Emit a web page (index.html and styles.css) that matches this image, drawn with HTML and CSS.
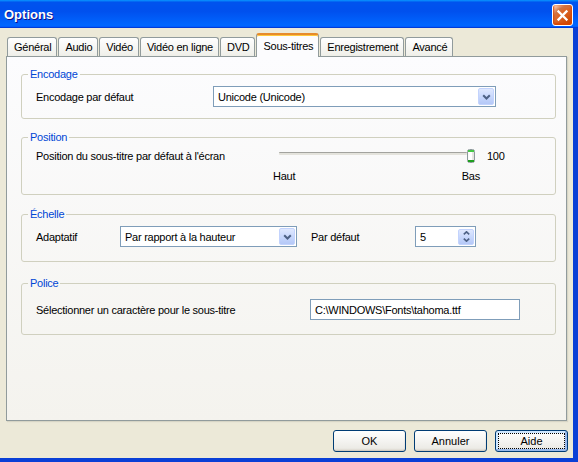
FILE: index.html
```html
<!DOCTYPE html>
<html lang="fr">
<head>
<meta charset="utf-8">
<title>Options</title>
<link rel="stylesheet" href="styles.css">
</head>
<body>
<div class="window">
  <div class="titlebar">
    <span class="title">Options</span>
    <div class="close" aria-label="Fermer">
      <svg width="13" height="13" viewBox="0 0 13 13"><path d="M2.5 2.5 L10.5 10.5 M10.5 2.5 L2.5 10.5" stroke="#fff" stroke-width="2.3" stroke-linecap="square" fill="none"/></svg>
    </div>
  </div>
  <div class="main">
    <div class="tabs">
      <div class="tab">Général</div>
      <div class="tab">Audio</div>
      <div class="tab">Vidéo</div>
      <div class="tab">Vidéo en ligne</div>
      <div class="tab">DVD</div>
      <div class="tab active">Sous-titres</div>
      <div class="tab">Enregistrement</div>
      <div class="tab">Avancé</div>
    </div>
    <div class="panel">
      <fieldset class="group grp-enc">
        <legend>Encodage</legend>
        <div class="row">
          <span class="label lbl-enc">Encodage par défaut</span>
          <div class="combo combo-enc">
            <span class="field-text">Unicode (Unicode)</span>
            <span class="drop"><svg width="9" height="6" viewBox="0 0 9 6"><path d="M1.2 1.2 L4.5 4.5 L7.8 1.2" stroke="#4d6185" stroke-width="2" fill="none"/></svg></span>
          </div>
        </div>
      </fieldset>

      <fieldset class="group grp-pos">
        <legend>Position</legend>
        <div class="row row-slider">
          <span class="label lbl-pos">Position du sous-titre par défaut à l'écran</span>
          <div class="slider">
            <span class="track"></span>
            <svg class="thumb" width="8" height="14" viewBox="0 0 8 14">
              <rect x="0.5" y="0.5" width="7" height="13" rx="2" fill="#f4f4f0" stroke="#8e9a9c"/>
              <rect x="1" y="1" width="6" height="2" fill="#45c645"/>
              <rect x="1" y="11" width="6" height="2" fill="#1f9f1f"/>
              <rect x="1.5" y="3" width="4" height="8" fill="#ffffff"/>
              <rect x="5.5" y="3" width="1" height="8" fill="#d6d6cf"/>
            </svg>
          </div>
          <span class="slider-value">100</span>
        </div>
        <div class="ticks">
          <span>Haut</span>
          <span>Bas</span>
        </div>
      </fieldset>

      <fieldset class="group grp-ech">
        <legend>Échelle</legend>
        <div class="row">
          <span class="label lbl-adapt">Adaptatif</span>
          <div class="combo combo-adapt">
            <span class="field-text">Par rapport à la hauteur</span>
            <span class="drop"><svg width="9" height="6" viewBox="0 0 9 6"><path d="M1.2 1.2 L4.5 4.5 L7.8 1.2" stroke="#4d6185" stroke-width="2" fill="none"/></svg></span>
          </div>
          <span class="label lbl-def">Par défaut</span>
          <div class="spin">
            <span class="field-text">5</span>
            <span class="spin-btns">
              <svg width="7" height="4" viewBox="0 0 7 4"><path d="M0.8 3.4 L3.5 0.8 L6.2 3.4" stroke="#4d6185" stroke-width="1.6" fill="none"/></svg>
              <svg width="7" height="4" viewBox="0 0 7 4"><path d="M0.8 0.6 L3.5 3.2 L6.2 0.6" stroke="#4d6185" stroke-width="1.6" fill="none"/></svg>
            </span>
          </div>
        </div>
      </fieldset>

      <fieldset class="group grp-pol">
        <legend>Police</legend>
        <div class="row">
          <span class="label lbl-pol">Sélectionner un caractère pour le sous-titre</span>
          <div class="textbox"><span class="field-text">C:\WINDOWS\Fonts\tahoma.ttf</span></div>
        </div>
      </fieldset>
    </div>
    <div class="buttons">
      <button class="btn">OK</button>
      <button class="btn">Annuler</button>
      <button class="btn btn-default">Aide</button>
    </div>
  </div>
</div>
</body>
</html>
```

FILE: styles.css
```css
* { box-sizing: border-box; }
html, body { margin: 0; padding: 0; }
body {
  width: 578px;
  height: 462px;
  overflow: hidden;
  font-family: "Liberation Sans", Arial, sans-serif;
  font-size: 11px;
  letter-spacing: -0.25px;
  color: #000;
  background: #ece9d8;
}
.window {
  width: 578px;
  height: 462px;
  display: flex;
  flex-direction: column;
}
.titlebar {
  flex: none;
  height: 28px;
  display: flex;
  align-items: center;
  justify-content: space-between;
  padding: 0 5px 0 4px;
  background: linear-gradient(180deg, #0997ff, #0053ee 8%, #0050ee 40%, #0066ff 88%, #0066ff 93%, #005bff 95%, #003dd7 96%, #003dd7);
}
.title {
  color: #fff;
  font-weight: bold;
  font-size: 13px;
  letter-spacing: 0;
  text-shadow: 1px 1px #0f1089;
  margin-top: 1px;
}
.close {
  width: 21px;
  height: 22px;
  margin-top: 2px;
  border: 1px solid #fff;
  border-radius: 3px;
  background: radial-gradient(circle at 90% 90%, #cc4600 0, #dc6527 55%, #cd7546 70%, #ffccb2 90%, #fff 100%);
  box-shadow: inset 0 -1px 2px 1px #da4600;
  display: flex;
  align-items: center;
  justify-content: center;
}
.main {
  flex: 1;
  display: flex;
  flex-direction: column;
  border-right: 5px solid #0a3fd6;
  border-bottom: 4px solid #0a3fd6;
  padding-top: 5px;
}
.tabs {
  flex: none;
  height: 23px;
  display: flex;
  align-items: flex-end;
  gap: 1px;
  padding-left: 7px;
}
.tab {
  height: 19px;
  padding: 0 5px 0 6px;
  border: 1px solid #919b9c;
  border-bottom: none;
  border-radius: 3px 3px 0 0;
  background: linear-gradient(180deg, #fff, #fafaf9 26%, #f0f0ea 95%, #ecebe5);
  display: flex;
  align-items: center;
  white-space: nowrap;
}
.tab.active {
  height: 24px;
  margin-bottom: -1px;
  padding-bottom: 1px;
  background: #fcfcfe;
  border-top: 2px solid #e68b2c;
  box-shadow: inset 0 1px #ffc83c;
  position: relative;
  z-index: 1;
}
.panel {
  flex: none;
  height: 365px;
  margin: 0 6px;
  border: 1px solid #919b9c;
  background: linear-gradient(180deg, #fcfcfe, #f4f3ee);
  box-shadow: 1px 1px 1px rgba(208, 206, 191, 0.75);
  padding: 11px 10px 0 14px;
  display: flex;
  flex-direction: column;
}
.group {
  margin: 0;
  min-width: 0;
  border: 1px solid #d0d0bf;
  border-radius: 3px;
  padding: 0 6px;
}
.group legend {
  padding: 0 2px;
  line-height: 13px;
  color: #0046d5;
}
.grp-enc { padding-top: 5px; padding-bottom: 11px; }
.grp-pos { margin-top: 12px; padding-top: 4px; padding-bottom: 11px; }
.grp-ech { margin-top: 13px; padding-top: 5px; padding-bottom: 14px; }
.grp-pol { margin-top: 15px; padding-top: 9px; padding-bottom: 14px; }

.row {
  display: flex;
  align-items: center;
  height: 21px;
  padding-left: 8px;
}
.label { flex: none; white-space: nowrap; }
.lbl-enc { width: 177px; }
.lbl-pos { width: 237px; }
.lbl-adapt { width: 84px; }
.lbl-def { width: 104px; margin-left: 14px; }
.lbl-pol { width: 274px; }

.combo, .spin, .textbox {
  flex: none;
  height: 21px;
  border: 1px solid #7f9db9;
  background: #fff;
  display: flex;
  align-items: center;
  justify-content: space-between;
  padding: 1px;
}
.field-text { padding-left: 3px; white-space: nowrap; }
.combo-enc { width: 283px; }
.combo-adapt { width: 177px; }
.spin { width: 61px; }
.textbox { width: 210px; }
.drop {
  width: 16px;
  height: 17px;
  border: 1px solid #c3d3fd;
  border-radius: 2px;
  background: linear-gradient(180deg, #dfe8fe, #c6d6fc 55%, #b5c8f7);
  display: flex;
  align-items: center;
  justify-content: center;
}
.spin-btns {
  width: 16px;
  height: 16px;
  border: 1px solid #c3d3fd;
  border-radius: 2px;
  background: linear-gradient(180deg, #dfe8fe, #c6d6fc 55%, #b5c8f7);
  display: flex;
  flex-direction: column;
  align-items: center;
  justify-content: center;
  gap: 3px;
}

.row-slider { height: 15px; }
.slider {
  flex: none;
  width: 202px;
  padding-left: 6px;
  display: flex;
  align-items: center;
}
.track {
  flex: 1;
  height: 3px;
  margin-bottom: 4px;
  border-top: 1px solid #a3a39e;
  background: #e4e3dc;
  border-radius: 1px;
}
.thumb { flex: none; display: block; }
.slider-value { margin-left: 12px; }
.ticks {
  display: flex;
  justify-content: space-between;
  width: 207px;
  margin: 7px 0 0 245px;
  line-height: 13px;
}

.buttons {
  flex: none;
  display: flex;
  justify-content: flex-end;
  gap: 8px;
  margin-top: 9px;
  padding-right: 5px;
}
.btn {
  width: 73px;
  height: 22px;
  padding: 0;
  font: inherit;
  color: #000;
  border: 1px solid #003c74;
  border-radius: 3px;
  background: linear-gradient(180deg, #fff, #ecebe6 86%, #d6d0c5);
  box-shadow: inset -1px -1px 0 rgba(0, 0, 0, 0.04);
}
.btn-default {
  box-shadow: inset -2px -2px #98b8ea, inset 2px 2px #cee7ff, inset -1px -1px #69a3e5;
  outline: 1px dotted #000;
  outline-offset: -4px;
}
```
